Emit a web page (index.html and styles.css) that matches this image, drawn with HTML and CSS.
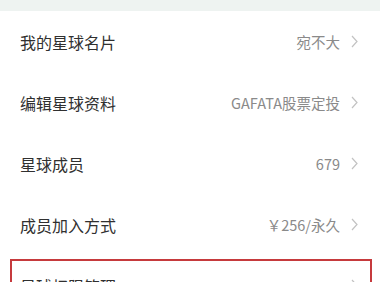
FILE: index.html
```html
<!DOCTYPE html>
<html lang="zh">
<head>
<meta charset="utf-8">
<link rel="stylesheet" href="styles.css">
</head>
<body>
<div class="topbar"></div>
<div class="list">
  <div class="row">
    <span class="label">我的星球名片</span>
    <span class="right"><span class="value">宛不大</span><svg class="chev" viewBox="0 0 7 13" width="7" height="13"><path d="M1 1 L6 6.5 L1 12" fill="none" stroke="#c2c2c2" stroke-width="1.2"/></svg></span>
  </div>
  <div class="row">
    <span class="label">编辑星球资料</span>
    <span class="right"><span class="value">GAFATA股票定投</span><svg class="chev" viewBox="0 0 7 13" width="7" height="13"><path d="M1 1 L6 6.5 L1 12" fill="none" stroke="#c2c2c2" stroke-width="1.2"/></svg></span>
  </div>
  <div class="row">
    <span class="label">星球成员</span>
    <span class="right"><span class="value">679</span><svg class="chev" viewBox="0 0 7 13" width="7" height="13"><path d="M1 1 L6 6.5 L1 12" fill="none" stroke="#c2c2c2" stroke-width="1.2"/></svg></span>
  </div>
  <div class="row">
    <span class="label">成员加入方式</span>
    <span class="right"><span class="value">￥256/永久</span><svg class="chev" viewBox="0 0 7 13" width="7" height="13"><path d="M1 1 L6 6.5 L1 12" fill="none" stroke="#c2c2c2" stroke-width="1.2"/></svg></span>
  </div>
  <div class="row row-hl">
    <span class="label">星球权限管理</span>
    <span class="right"><svg class="chev" viewBox="0 0 7 13" width="7" height="13"><path d="M1 1 L6 6.5 L1 12" fill="none" stroke="#c2c2c2" stroke-width="1.2"/></svg></span>
  </div>
</div>
</body>
</html>
```
FILE: styles.css
```css
html, body {
  margin: 0;
  padding: 0;
  background: #ffffff;
  font-family: "Noto Sans CJK SC", "Noto Sans", sans-serif;
}
.topbar {
  height: 11px;
  background: #eef3f1;
}
.list {
  display: flex;
  flex-direction: column;
}
.row {
  height: 61px;
  display: flex;
  align-items: center;
  justify-content: space-between;
  padding: 0 22px 0 20px;
  box-sizing: border-box;
}
.label {
  font-size: 16px;
  color: #303030;
}
.right {
  display: flex;
  align-items: center;
  gap: 11px;
}
.value {
  font-size: 14.5px;
  color: #8a8a8a;
}
.chev {
  display: block;
}
.row-hl {
  margin: 4px 8px 0 10px;
  border: 2px solid #c63a3d;
  height: 53px;
  padding: 0 12px 0 8px;
}
```
